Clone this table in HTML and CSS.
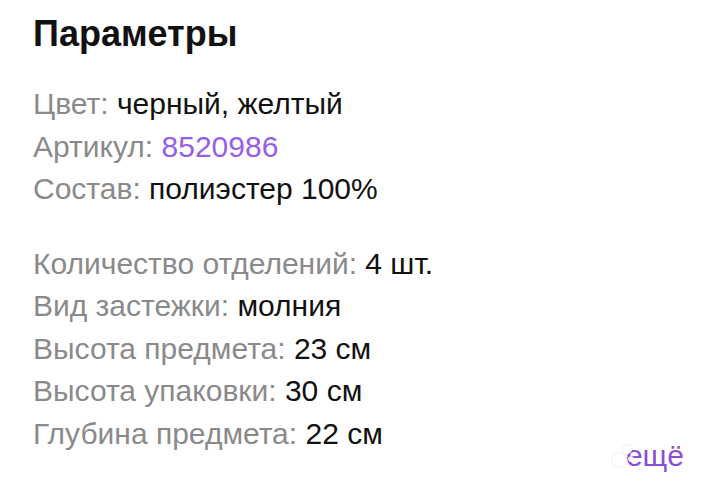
FILE: index.html
```html
<!DOCTYPE html>
<html lang="ru">
<head>
<meta charset="utf-8">
<link rel="stylesheet" href="styles.css">
</head>
<body>
<section class="params">
  <h1 class="title">Параметры</h1>
  <ul class="group">
    <li><span class="label">Цвет:</span> черный, желтый</li>
    <li><span class="label">Артикул:</span> <span class="link">8520986</span></li>
    <li><span class="label">Состав:</span> полиэстер 100%</li>
  </ul>
  <ul class="group">
    <li><span class="label">Количество отделений:</span> 4 шт.</li>
    <li><span class="label">Вид застежки:</span> молния</li>
    <li><span class="label">Высота предмета:</span> 23 см</li>
    <li><span class="label">Высота упаковки:</span> 30 см</li>
    <li><span class="label">Глубина предмета:</span> 22 см</li>
  </ul>
  <div class="more"><span class="more-link">ещё</span></div>
  <div class="watermark" aria-hidden="true">
    <i class="d1"></i><i class="d2"></i><i class="d3"></i>
  </div>
</section>
</body>
</html>
```
FILE: styles.css
```css
html, body {
  margin: 0;
  padding: 0;
  background: #fff;
}
body {
  font-family: "Liberation Sans", Arial, sans-serif;
  color: #000;
  width: 720px;
  height: 483px;
  overflow: hidden;
}
.params {
  padding: 12px 0 0 33px;
  position: relative;
  height: 483px;
  box-sizing: border-box;
}
.title {
  margin: 0;
  font-size: 36px;
  font-weight: 700;
  line-height: 44px;
  color: #111;
}
.group {
  list-style: none;
  margin: 0;
  padding: 0;
  font-size: 30px;
  line-height: 42.5px;
  color: #111;
}
.group:first-of-type {
  margin-top: 27px;
}
.group + .group {
  margin-top: 32px;
}
.label {
  color: #8a8a8a;
}
.link {
  color: #965eeb;
}
.more {
  position: absolute;
  right: 36px;
  bottom: 10px;
  font-size: 30px;
  line-height: 34px;
  color: #8a4fd8;
}
.watermark {
  position: absolute;
  left: 612px;
  bottom: 14px;
  width: 24px;
  height: 26px;
  opacity: 0.85;
}
.watermark i {
  position: absolute;
  border-radius: 50%;
  background: #fff;
  box-shadow: 0 0 2px rgba(0,0,0,0.18);
}
.d1 { width: 14px; height: 14px; left: 0; top: 10px; }
.d2 { width: 9px; height: 9px; left: 11px; top: 2px; }
.d3 { width: 6px; height: 6px; left: 16px; top: 13px; }
```
